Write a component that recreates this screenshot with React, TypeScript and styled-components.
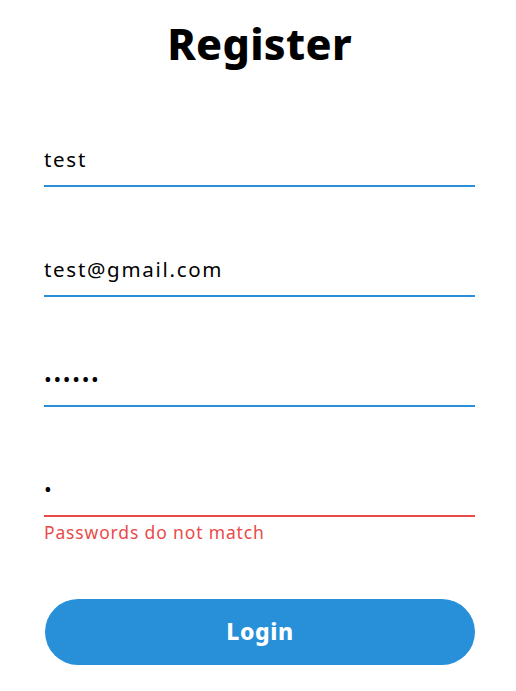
import React from "react";
import styled, { createGlobalStyle } from "styled-components";

const Global = createGlobalStyle`
  html, body { margin: 0; padding: 0; background: #ffffff; }
  body { font-family: "Noto Sans", "Open Sans", sans-serif; }
  * { box-sizing: border-box; }
`;

const Page = styled.div`
  width: 516px;
  padding: 14px 41px 0 44px;
  display: flex;
  flex-direction: column;
`;

const Title = styled.h1`
  margin: 0;
  text-align: center;
  font-family: "Noto Sans", sans-serif;
  font-weight: 800;
  font-size: 43px;
  line-height: 60px;
  color: #000;
  letter-spacing: 0.3px;
`;

const Form = styled.form`
  margin-top: 65px;
  display: flex;
  flex-direction: column;
  gap: 62px;
`;

const Field = styled.div<{ $gap?: number }>`
  display: flex;
  flex-direction: column;
  margin-top: ${(p) => p.$gap ?? 0}px;
`;

const Input = styled.input<{ $error?: boolean }>`
  width: 100%;
  height: 48px;
  border: none;
  border-bottom: 2px solid ${(p) => (p.$error ? "#e94b4b" : "#2a8fd8")};
  outline: none;
  padding: 0 0 6px 0;
  font-family: "Noto Sans", sans-serif;
  font-size: 20.5px;
  letter-spacing: 1.7px;
  color: #000;
  background: transparent;
`;

const ErrorText = styled.div`
  font-family: "Noto Sans", sans-serif;
  font-size: 17.5px;
  letter-spacing: 0.85px;
  line-height: 31px;
  color: #e94b4b;
`;

const Button = styled.button`
  margin-top: 51px;
  margin-left: 1px;
  height: 66px;
  border: none;
  border-radius: 33px;
  background: #2890d9;
  color: #fff;
  font-family: "Noto Sans", sans-serif;
  font-weight: 800;
  font-size: 23px;
  letter-spacing: 0.6px;
  padding: 0 0 2px 0;
  cursor: pointer;
`;

export default function App() {
  return (
    <>
      <Global />
      <Page>
        <Title>Register</Title>
        <Form onSubmit={(e) => e.preventDefault()}>
          <Field>
            <Input type="text" defaultValue="test" />
          </Field>
          <Field>
            <Input type="email" defaultValue="test@gmail.com" />
          </Field>
          <Field>
            <Input type="password" defaultValue="123456" />
          </Field>
        </Form>
        <Field $gap={62}>
          <Input type="password" defaultValue="1" $error />
          <ErrorText>Passwords do not match</ErrorText>
        </Field>
        <Button type="button">Login</Button>
      </Page>
    </>
  );
}
